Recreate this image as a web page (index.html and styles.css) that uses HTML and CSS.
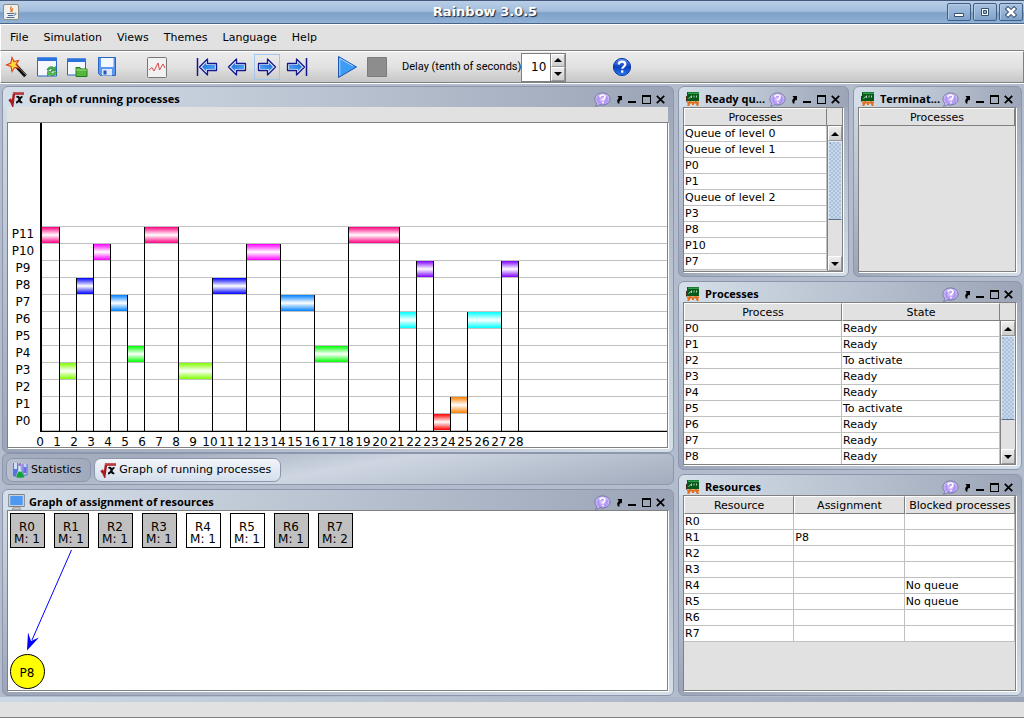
FILE: index.html
```html
<!DOCTYPE html>
<html lang="en">
<head>
<meta charset="utf-8">
<title>Rainbow 3.0.5</title>
<link rel="stylesheet" href="styles.css">
</head>
<body>
<svg class="defs" aria-hidden="true">
  <symbol id="i-help" viewBox="0 0 17 15">
    <path d="M8.500 1C12.500 1 16 3.500 16 7S12.500 13 8.500 13c-1 0-2-.1-2.800-.4C4.500 13.600 3 14 1.500 14c1-.8 1.500-1.500 1.500-2.400C1.500 10.500 1 9 1 7c0-3.500 3.500-6 7.500-6z" fill="url(#bubble)" stroke="#5a5590" stroke-width=".7"/>
    <path d="M6 5.200C6 3.600 7 3 8.500 3S11 3.800 11 5c0 1.600-2 1.800-2 3.200M9 10v1.500" fill="none" stroke="#fff" stroke-width="1.600"/>
  </symbol>
  <symbol id="i-undock" viewBox="0 0 7 9"><path d="M1.500 1H6v4.500L5 4.700C3.600 5.500 3.200 6.500 3.500 8.500H2C.8 6.500 1 4.500 2.800 3z" fill="#000"/></symbol>
  <symbol id="i-min" viewBox="0 0 9 9"><path d="M0 6h8v2H0z" fill="#000"/></symbol>
  <symbol id="i-max" viewBox="0 0 9 9"><path d="M0 0h9v9H0zM1 2v6h7V2z" fill="#000" fill-rule="evenodd"/></symbol>
  <symbol id="i-close" viewBox="0 0 9 9"><path d="M.8.8l7.400 7.400M8.200.8L.8 8.200" stroke="#000" stroke-width="1.800" fill="none"/></symbol>
  <symbol id="i-board" viewBox="0 0 14 14">
    <path d="M4.500 9L2 14M9.500 9L12 14M1 10.500h12M7 10v3" stroke="#e0701f" stroke-width="2" fill="none"/>
    <path d="M1 0h12v9H1z" fill="#07591a"/><path d="M2 .5h11V2H2z" fill="#2fa04c"/>
    <path d="M2.500 6.500L5 4.500M5.500 6V3.500M8 5.500V3.500M10.500 5.500v-2" stroke="#d8eedb" stroke-width=".8" fill="none"/>
    <path d="M.5 4v5.500" stroke="#4a2a16"/>
  </symbol>
  <symbol id="i-root" viewBox="0 0 17 15">
    <path d="M1 9l1.500-1L4.500 12.500 6 1.500H16" fill="none" stroke="#a81c20" stroke-width="2.400"/>
    <path d="M5.500 2V1H16" fill="none" stroke="#e06868" stroke-width=".8"/>
    <path d="M8.500 5.200c2.200-1 2.600.3 3 2.300s.8 3.400 2.700 2.500M14.500 4.800c-2.500-.2-3.500 5.700-6.500 5.700" fill="none" stroke="#0a0a0a" stroke-width="2"/>
  </symbol>
  <symbol id="i-arrow" viewBox="0 0 24 24">
    <path d="M3.500 12L11.500 4v4.500h9v7h-9V20z" fill="#dcecff" stroke="#16168c" stroke-width="1.300" stroke-linejoin="round"/>
    <path d="M6 12L10.200 7.700V10H19v4h-8.800v2.300z" fill="url(#blue)"/>
  </symbol>
  <symbol id="i-up" viewBox="0 0 8 4"><path d="M0 4L4 0l4 4z" fill="#000"/></symbol>
  <symbol id="i-down" viewBox="0 0 8 4"><path d="M0 0l4 4 4-4z" fill="#000"/></symbol>
  <linearGradient id="blue" x1="0" y1="0" x2="1" y2="1"><stop offset="0" stop-color="#1663cf"/><stop offset="1" stop-color="#59b5ff"/></linearGradient>
  <radialGradient id="bubble"><stop offset="0" stop-color="#e9dcff"/><stop offset=".6" stop-color="#ab8cf2"/><stop offset="1" stop-color="#d6d0ff"/></radialGradient>
  <linearGradient id="orb" x1="0" y1="0" x2="0" y2="1"><stop offset="0" stop-color="#5f97ee"/><stop offset=".5" stop-color="#0b3fc0"/><stop offset="1" stop-color="#2b7bf0"/></linearGradient>
</svg>

<header class="window-title">
  <svg class="java" width="16" height="16" viewBox="0 0 16 16"><rect x=".5" y=".5" width="15" height="15" rx="1.500" fill="#eef0ee" stroke="#8d8d83"/><path d="M8.500 2.500c-3 2 1.500 3-1 5.500M10 4.500C8 5.800 10 6.800 8.700 8" stroke="#e8731c" fill="none" stroke-width="1.200"/><path d="M4 9.500h7M5 11.500h5.500M3.500 13.500h8M11.500 9c2.500 0 1.500 2-.5 2.200" stroke="#4b6c93" fill="none"/></svg>
  <h1>Rainbow 3.0.5</h1>
  <div class="window-buttons">
    <button aria-label="Minimize"><svg width="12" height="12" viewBox="0 0 12 12"><path d="M1.500 7.500h9v3h-9z" fill="#fff" stroke="#34506f"/></svg></button>
    <button aria-label="Maximize"><svg width="12" height="12" viewBox="0 0 12 12"><path d="M2.500 2.500h7v7h-7z" fill="#fff" stroke="#34506f"/><path d="M4.500 4.500h3v3h-3z" fill="#8fb0d4" stroke="#34506f"/></svg></button>
    <button aria-label="Close"><svg width="12" height="12" viewBox="0 0 12 12"><path d="M3 3l6 6m0-6l-6 6" stroke="#34506f" stroke-width="4.500" stroke-linecap="square"/><path d="M3 3l6 6m0-6l-6 6" stroke="#fff" stroke-width="2.600" stroke-linecap="square"/></svg></button>
  </div>
</header>

<nav class="menubar">
  <button>File</button><button>Simulation</button><button>Views</button><button>Themes</button><button>Language</button><button>Help</button>
</nav>

<div class="toolbar">
  <div class="group">
    <button aria-label="New"><svg viewBox="0 0 24 24"><path d="M9.500 9l11 12" stroke="#111" stroke-width="3.600"/><path d="M10 8.500l11 11.500" stroke="#8a7b70" stroke-width="1"/><path d="M7 2.500l2 4 4.500-1-2.500 4 3 3.500-4.500-.5-2.500 4-1-5-4.500-1.500 4.300-2z" fill="#ffd83c" stroke="#d9421e" stroke-width="1.100"/></svg></button>
    <button aria-label="Reload"><svg viewBox="0 0 24 24"><path d="M2.500 3h19v18h-19z" fill="#f4f7fb" stroke="#2a66c4"/><path d="M2 2.500h20V6H2z" fill="#2a72dd"/><path d="M12 15c1-4 6-4 7-2l1.500-1.500V16H16l1.500-1.500c-1.500-1-3-.5-3.500.8z" fill="#3fae49" stroke="#1f7a2c" stroke-width=".6"/><path d="M22 17c-1 4-6 4.500-7.500 2.500L12.500 21v-4.500H17l-1.200 1.500c1.500 1 3 .5 3.700-1z" fill="#57bf52" stroke="#1f7a2c" stroke-width=".6"/></svg></button>
    <button aria-label="Open"><svg viewBox="0 0 24 24"><path d="M2.500 4h18v16h-18z" fill="#f4f7fb" stroke="#2a66c4"/><path d="M2 3.500h19V7H2z" fill="#2a72dd"/><path d="M11 12.500h4l1 1.500h6v7.500H11z" fill="#55b73c" stroke="#24791f"/><path d="M11 15h11" stroke="#9be07d"/></svg></button>
    <button aria-label="Save"><svg viewBox="0 0 24 24"><path d="M3.500 2.500h17v18h-15l-2-2z" fill="#5a97ee" stroke="#2b63be"/><path d="M6 3h12.500v9H6z" fill="#f3f8ff"/><path d="M7 14h10v6.500H7z" fill="#dbe6f6"/><path d="M8.500 15.500h3v4h-3z" fill="#2458b2"/></svg></button>
  </div>
  <div class="group">
    <button aria-label="Statistics"><svg viewBox="0 0 24 24"><rect x="2.500" y="2.500" width="19" height="20" rx="1" fill="#f1f1f1" stroke="#777"/><path d="M4 15l3-2.500 2 3.500 4-8 1.500 7 3.500-6 2 4" fill="none" stroke="#d84848"/></svg></button>
  </div>
  <div class="group">
    <button aria-label="First"><svg viewBox="0 0 24 24"><use href="#i-arrow" x="1"/><path d="M2.500 3v18" stroke="#16168c" stroke-width="1.500"/></svg></button>
    <button aria-label="Previous"><svg viewBox="0 0 24 24"><use href="#i-arrow"/></svg></button>
    <button aria-label="Next" class="focused"><svg viewBox="0 0 24 24"><use href="#i-arrow" transform="matrix(-1 0 0 1 24 0)"/></svg></button>
    <button aria-label="Last"><svg viewBox="0 0 24 24"><use href="#i-arrow" transform="matrix(-1 0 0 1 23 0)"/><path d="M21.500 3v18" stroke="#16168c" stroke-width="1.500"/></svg></button>
  </div>
  <div class="group">
    <button aria-label="Play"><svg viewBox="0 0 24 24"><path d="M3.500 1.500l18 10.500-18 10.500z" fill="#3d9cf5" stroke="#1c55b0"/><path d="M4.800 20.500v-17L18 11" fill="none" stroke="#a9d6ff"/></svg></button>
    <button aria-label="Stop"><svg viewBox="0 0 24 24"><path d="M2.500 2.500h19v19h-19z" fill="#8d8d8d" stroke="#7b7b7b"/></svg></button>
  </div>
  <div class="delay">
    <label for="delay">Delay (tenth of seconds)</label>
    <div class="spinner">
      <input id="delay" type="text" value="10">
      <div class="steps">
        <button aria-label="Increase"><svg width="8" height="4"><use href="#i-up"/></svg></button>
        <button aria-label="Decrease"><svg width="8" height="4"><use href="#i-down"/></svg></button>
      </div>
    </div>
  </div>
  <button aria-label="Help"><svg viewBox="0 0 24 24"><circle cx="12" cy="12" r="8.600" fill="url(#orb)" stroke="#0b3aa8"/><path d="M8.800 9.600C8.800 7.500 10.200 6.700 12 6.700s3.300 1 3.300 2.800c0 2.200-3 2.200-3 4.300M12.200 15.300v2.400" stroke="#fff" stroke-width="2.200" fill="none"/></svg></button>
</div>

<main class="desktop">
  <div class="column left">
    <section class="panel run-panel">
      <div class="panel-title">
        <svg width="17" height="15"><use href="#i-root"/></svg>
        <h2>Graph of running processes</h2>
        <div class="actions"><button aria-label="Help"><svg width="17" height="15"><use href="#i-help"/></svg></button><button aria-label="Undock"><svg width="7" height="9"><use href="#i-undock"/></svg></button><button aria-label="Minimize"><svg width="9" height="9"><use href="#i-min"/></svg></button><button aria-label="Maximize"><svg width="9" height="9"><use href="#i-max"/></svg></button><button aria-label="Close"><svg width="9" height="9"><use href="#i-close"/></svg></button></div>
      </div>
      <div class="strip"></div>
      <div class="content canvas">
        <svg class="gantt" width="659" height="324" viewBox="8 123 659 324">
          <defs>
            <linearGradient id="c0" x2="0" y2="1"><stop offset="0" stop-color="#f00"/><stop offset=".5" stop-color="#fff"/><stop offset="1" stop-color="#f00"/></linearGradient>
            <linearGradient id="c1" x2="0" y2="1"><stop offset="0" stop-color="#ff8000"/><stop offset=".5" stop-color="#fff"/><stop offset="1" stop-color="#ff8000"/></linearGradient>
            <linearGradient id="c3" x2="0" y2="1"><stop offset="0" stop-color="#80ff00"/><stop offset=".5" stop-color="#fff"/><stop offset="1" stop-color="#80ff00"/></linearGradient>
            <linearGradient id="c4" x2="0" y2="1"><stop offset="0" stop-color="#0f0"/><stop offset=".5" stop-color="#fff"/><stop offset="1" stop-color="#0f0"/></linearGradient>
            <linearGradient id="c6" x2="0" y2="1"><stop offset="0" stop-color="#0ff"/><stop offset=".5" stop-color="#fff"/><stop offset="1" stop-color="#0ff"/></linearGradient>
            <linearGradient id="c7" x2="0" y2="1"><stop offset="0" stop-color="#0080ff"/><stop offset=".5" stop-color="#fff"/><stop offset="1" stop-color="#0080ff"/></linearGradient>
            <linearGradient id="c8" x2="0" y2="1"><stop offset="0" stop-color="#00f"/><stop offset=".5" stop-color="#fff"/><stop offset="1" stop-color="#00f"/></linearGradient>
            <linearGradient id="c9" x2="0" y2="1"><stop offset="0" stop-color="#8000ff"/><stop offset=".5" stop-color="#fff"/><stop offset="1" stop-color="#8000ff"/></linearGradient>
            <linearGradient id="c10" x2="0" y2="1"><stop offset="0" stop-color="#f0f"/><stop offset=".5" stop-color="#fff"/><stop offset="1" stop-color="#f0f"/></linearGradient>
            <linearGradient id="c11" x2="0" y2="1"><stop offset="0" stop-color="#ff0080"/><stop offset=".5" stop-color="#fff"/><stop offset="1" stop-color="#ff0080"/></linearGradient>
          </defs>
          <path class="grid" d="M40 226h2000v1H40zM40 243h2000v1H40zM40 260h2000v1H40zM40 277h2000v1H40zM40 294h2000v1H40zM40 311h2000v1H40zM40 328h2000v1H40zM40 345h2000v1H40zM40 362h2000v1H40zM40 379h2000v1H40zM40 396h2000v1H40zM40 413h2000v1H40zM40 430h2000v1H40z"/>
          <rect x="42" y="227" width="17" height="16" fill="url(#c11)"/>
          <rect x="60" y="363" width="16" height="16" fill="url(#c3)"/>
          <rect x="77" y="278" width="16" height="16" fill="url(#c8)"/>
          <rect x="94" y="244" width="16" height="16" fill="url(#c10)"/>
          <rect x="111" y="295" width="16" height="16" fill="url(#c7)"/>
          <rect x="128" y="346" width="16" height="16" fill="url(#c4)"/>
          <rect x="145" y="227" width="33" height="16" fill="url(#c11)"/>
          <rect x="179" y="363" width="33" height="16" fill="url(#c3)"/>
          <rect x="213" y="278" width="33" height="16" fill="url(#c8)"/>
          <rect x="247" y="244" width="33" height="16" fill="url(#c10)"/>
          <rect x="281" y="295" width="33" height="16" fill="url(#c7)"/>
          <rect x="315" y="346" width="33" height="16" fill="url(#c4)"/>
          <rect x="349" y="227" width="50" height="16" fill="url(#c11)"/>
          <rect x="400" y="312" width="16" height="16" fill="url(#c6)"/>
          <rect x="417" y="261" width="16" height="16" fill="url(#c9)"/>
          <rect x="434" y="414" width="16" height="16" fill="url(#c0)"/>
          <rect x="451" y="397" width="16" height="16" fill="url(#c1)"/>
          <rect x="468" y="312" width="33" height="16" fill="url(#c6)"/>
          <rect x="502" y="261" width="16" height="16" fill="url(#c9)"/>
          <path class="ink" d="M59 227h1v204h-1zM76 278h1v153h-1zM93 244h1v187h-1zM110 244h1v187h-1zM127 295h1v136h-1zM144 227h1v204h-1zM178 227h1v204h-1zM212 278h1v153h-1zM246 244h1v187h-1zM280 244h1v187h-1zM314 295h1v136h-1zM348 227h1v204h-1zM399 227h1v204h-1zM416 261h1v170h-1zM433 261h1v170h-1zM450 397h1v34h-1zM467 312h1v119h-1zM501 261h1v170h-1zM518 261h1v170h-1z"/>
          <path class="ink" d="M40 120h2v312h-2zM40 431h2000v1H40z"/>
          <g class="labels">
            <text x="23" y="238">P11</text><text x="23" y="255">P10</text><text x="23" y="272">P9</text><text x="23" y="289">P8</text><text x="23" y="306">P7</text><text x="23" y="323">P6</text><text x="23" y="340">P5</text><text x="23" y="357">P4</text><text x="23" y="374">P3</text><text x="23" y="391">P2</text><text x="23" y="408">P1</text><text x="23" y="425">P0</text>
            <text x="40" y="446">0</text><text x="57" y="446">1</text><text x="74" y="446">2</text><text x="91" y="446">3</text><text x="108" y="446">4</text><text x="125" y="446">5</text><text x="142" y="446">6</text><text x="159" y="446">7</text><text x="176" y="446">8</text><text x="193" y="446">9</text><text x="210" y="446">10</text><text x="227" y="446">11</text><text x="244" y="446">12</text><text x="261" y="446">13</text><text x="278" y="446">14</text><text x="295" y="446">15</text><text x="312" y="446">16</text><text x="329" y="446">17</text><text x="346" y="446">18</text><text x="363" y="446">19</text><text x="380" y="446">20</text><text x="397" y="446">21</text><text x="414" y="446">22</text><text x="431" y="446">23</text><text x="448" y="446">24</text><text x="465" y="446">25</text><text x="482" y="446">26</text><text x="499" y="446">27</text><text x="516" y="446">28</text>
          </g>
        </svg>
      </div>
    </section>

    <div class="tabs">
      <button class="tab"><svg width="17" height="16" viewBox="0 0 17 16"><path d="M1.500 1v13h4V1" fill="#cfe0ff" stroke="#5f79c8"/><path d="M2 7h3v7H2z" fill="#5276e0"/><path d="M11 2v11h4V2" fill="#c3d2ff" stroke="#5f6fd0"/><path d="M11.500 5h3v6h-3z" fill="#6f6ae8"/><path d="M6 3h3v4l3.500 6.500c0 1.500-1 2-2 2h-5c-1.500 0-2-1-1.500-2L6 8z" fill="#dfe8ff" stroke="#6c7fb5" stroke-width=".7"/><path d="M6.500 9.500h3.200l2.300 4c.3 1-.5 2-1.500 2H5.700c-1.200 0-1.700-1-1.200-2z" fill="#13a637"/><path d="M7 1.500h2v2H7z" fill="#b451d6"/></svg>Statistics</button>
      <button class="tab selected"><svg width="17" height="15"><use href="#i-root"/></svg>Graph of running processes</button>
    </div>

    <section class="panel assign-panel">
      <div class="panel-title">
        <svg width="17" height="16" viewBox="0 0 17 16"><path d="M1.500 1h14v11h-14z" fill="#4f98f2" stroke="#e3e3e3" stroke-width="1.400"/><path d="M.7.500h15.600v12H.7z" fill="none" stroke="#6a6a6a" stroke-width=".8"/><path d="M6 13h5l2 2.300H4z" fill="#d0d0cc" stroke="#777" stroke-width=".6"/></svg>
        <h2>Graph of assignment of resources</h2>
        <div class="actions"><button aria-label="Help"><svg width="17" height="15"><use href="#i-help"/></svg></button><button aria-label="Undock"><svg width="7" height="9"><use href="#i-undock"/></svg></button><button aria-label="Minimize"><svg width="9" height="9"><use href="#i-min"/></svg></button><button aria-label="Maximize"><svg width="9" height="9"><use href="#i-max"/></svg></button><button aria-label="Close"><svg width="9" height="9"><use href="#i-close"/></svg></button></div>
      </div>
      <div class="content canvas">
        <svg width="659" height="179" viewBox="8 511 659 179">
          <g class="nodes">
            <rect class="busy" x="10.500" y="513.500" width="34" height="34"/><rect class="busy" x="54.500" y="513.500" width="34" height="34"/><rect class="busy" x="98.500" y="513.500" width="34" height="34"/><rect class="busy" x="142.500" y="513.500" width="34" height="34"/><rect x="186.500" y="513.500" width="34" height="34"/><rect x="230.500" y="513.500" width="34" height="34"/><rect class="busy" x="274.500" y="513.500" width="34" height="34"/><rect class="busy" x="318.500" y="513.500" width="34" height="34"/>
            <circle cx="27.500" cy="671.500" r="17"/>
          </g>
          <path d="M71.500 550L32 640" stroke="#00f" fill="none"/>
          <path d="M27 650.500l1-18 3 8.500 8-3.500z" fill="#00f"/>
          <g class="labels">
            <text x="27" y="531">R0</text><text x="27" y="543">M: 1</text><text x="71" y="531">R1</text><text x="71" y="543">M: 1</text><text x="115" y="531">R2</text><text x="115" y="543">M: 1</text><text x="159" y="531">R3</text><text x="159" y="543">M: 1</text><text x="203" y="531">R4</text><text x="203" y="543">M: 1</text><text x="247" y="531">R5</text><text x="247" y="543">M: 1</text><text x="291" y="531">R6</text><text x="291" y="543">M: 1</text><text x="335" y="531">R7</text><text x="335" y="543">M: 2</text><text x="27" y="677">P8</text>
          </g>
        </svg>
      </div>
    </section>
  </div>

  <div class="column right">
    <div class="queues">
      <section class="panel">
        <div class="panel-title">
          <svg width="14" height="14"><use href="#i-board"/></svg>
          <h2>Ready qu...</h2>
          <div class="actions"><button aria-label="Help"><svg width="17" height="15"><use href="#i-help"/></svg></button><button aria-label="Undock"><svg width="7" height="9"><use href="#i-undock"/></svg></button><button aria-label="Minimize"><svg width="9" height="9"><use href="#i-min"/></svg></button><button aria-label="Maximize"><svg width="9" height="9"><use href="#i-max"/></svg></button><button aria-label="Close"><svg width="9" height="9"><use href="#i-close"/></svg></button></div>
        </div>
        <div class="content scroller">
          <table>
            <thead><tr><th>Processes</th></tr></thead>
            <tbody><tr><td>Queue of level 0</td></tr><tr><td>Queue of level 1</td></tr><tr><td>P0</td></tr><tr><td>P1</td></tr><tr><td>Queue of level 2</td></tr><tr><td>P3</td></tr><tr><td>P8</td></tr><tr><td>P10</td></tr><tr><td>P7</td></tr></tbody>
          </table>
          <div class="scrollbar"><button aria-label="Scroll up"><svg width="8" height="4"><use href="#i-up"/></svg></button><div class="track"><div class="thumb queue-thumb"></div></div><button aria-label="Scroll down"><svg width="8" height="4"><use href="#i-down"/></svg></button></div>
        </div>
      </section>
      <section class="panel">
        <div class="panel-title">
          <svg width="14" height="14"><use href="#i-board"/></svg>
          <h2>Terminat...</h2>
          <div class="actions"><button aria-label="Help"><svg width="17" height="15"><use href="#i-help"/></svg></button><button aria-label="Undock"><svg width="7" height="9"><use href="#i-undock"/></svg></button><button aria-label="Minimize"><svg width="9" height="9"><use href="#i-min"/></svg></button><button aria-label="Maximize"><svg width="9" height="9"><use href="#i-max"/></svg></button><button aria-label="Close"><svg width="9" height="9"><use href="#i-close"/></svg></button></div>
        </div>
        <div class="content scroller">
          <table><thead><tr><th>Processes</th></tr></thead></table>
        </div>
      </section>
    </div>

    <section class="panel">
      <div class="panel-title">
        <svg width="14" height="14"><use href="#i-board"/></svg>
        <h2>Processes</h2>
        <div class="actions"><button aria-label="Help"><svg width="17" height="15"><use href="#i-help"/></svg></button><button aria-label="Undock"><svg width="7" height="9"><use href="#i-undock"/></svg></button><button aria-label="Minimize"><svg width="9" height="9"><use href="#i-min"/></svg></button><button aria-label="Maximize"><svg width="9" height="9"><use href="#i-max"/></svg></button><button aria-label="Close"><svg width="9" height="9"><use href="#i-close"/></svg></button></div>
      </div>
      <div class="content scroller">
        <table>
          <thead><tr><th>Process</th><th>State</th></tr></thead>
          <tbody><tr><td>P0</td><td>Ready</td></tr><tr><td>P1</td><td>Ready</td></tr><tr><td>P2</td><td>To activate</td></tr><tr><td>P3</td><td>Ready</td></tr><tr><td>P4</td><td>Ready</td></tr><tr><td>P5</td><td>To activate</td></tr><tr><td>P6</td><td>Ready</td></tr><tr><td>P7</td><td>Ready</td></tr><tr><td>P8</td><td>Ready</td></tr></tbody>
        </table>
        <div class="scrollbar"><button aria-label="Scroll up"><svg width="8" height="4"><use href="#i-up"/></svg></button><div class="track"><div class="thumb process-thumb"></div></div><button aria-label="Scroll down"><svg width="8" height="4"><use href="#i-down"/></svg></button></div>
      </div>
    </section>

    <section class="panel">
      <div class="panel-title">
        <svg width="14" height="14"><use href="#i-board"/></svg>
        <h2>Resources</h2>
        <div class="actions"><button aria-label="Help"><svg width="17" height="15"><use href="#i-help"/></svg></button><button aria-label="Undock"><svg width="7" height="9"><use href="#i-undock"/></svg></button><button aria-label="Minimize"><svg width="9" height="9"><use href="#i-min"/></svg></button><button aria-label="Maximize"><svg width="9" height="9"><use href="#i-max"/></svg></button><button aria-label="Close"><svg width="9" height="9"><use href="#i-close"/></svg></button></div>
      </div>
      <div class="content scroller">
        <table>
          <thead><tr><th>Resource</th><th>Assignment</th><th>Blocked processes</th></tr></thead>
          <tbody><tr><td>R0</td><td></td><td></td></tr><tr><td>R1</td><td>P8</td><td></td></tr><tr><td>R2</td><td></td><td></td></tr><tr><td>R3</td><td></td><td></td></tr><tr><td>R4</td><td></td><td>No queue</td></tr><tr><td>R5</td><td></td><td>No queue</td></tr><tr><td>R6</td><td></td><td></td></tr><tr><td>R7</td><td></td><td></td></tr></tbody>
        </table>
      </div>
    </section>
  </div>
</main>

<footer class="statusbar"></footer>
</body>
</html>
```
FILE: styles.css
```css
:root {
  --face: #e1e1e1;
  --line: #808080;
  --light: #d5dfe9;
  --dark: #9ca5b7;
  --edge: #8d96ac;
}

* { box-sizing: border-box; }

body {
  margin: 0;
  height: 100vh;
  display: flex;
  flex-direction: column;
  background: var(--face);
  color: #000;
  font: 11px/16px "DejaVu Sans", sans-serif;
}

button {
  display: flex;
  align-items: center;
  justify-content: center;
  margin: 0;
  padding: 0;
  border: 0;
  background: none;
  color: inherit;
  font: inherit;
}

h1, h2 { margin: 0; }
svg { display: block; flex: none; }
.defs { position: absolute; width: 0; height: 0; }

.window-title {
  display: flex;
  flex: none;
  align-items: center;
  height: 24px;
  padding: 0 1px 0 3px;
  border-top: 1px solid #46587a;
  border-bottom: 1px solid #4a6488;
  background: linear-gradient(#b9cee6, #a3bfde 45%, #7da1c9 55%, #92b2d6);
}
.window-title h1 {
  flex: 1;
  padding-left: 4px;
  color: #fff;
  font: bold 13px/22px "DejaVu Sans", sans-serif;
  text-align: center;
  text-shadow: 1px 1px 1px #223;
}
.window-buttons { display: flex; gap: 2px; }
.window-buttons button {
  width: 24px;
  height: 18px;
  border: 1px solid #3f5f86;
  border-radius: 2px;
  box-shadow: inset 1px 1px 0 #b5cbe4;
  background: linear-gradient(#a9c3e0, #7fa2ca);
}

.menubar {
  display: flex;
  flex: none;
  gap: 15px;
  height: 27px;
  padding: 0 9px;
  border-top: 1px solid #fff;
  border-left: 1px solid #fff;
  border-bottom: 1px solid var(--line);
}

.toolbar {
  display: flex;
  flex: none;
  align-items: center;
  height: 32px;
  padding-left: 1px;
  border: 1px solid #fff;
  border-right-color: var(--line);
  border-bottom-color: var(--line);
  background: linear-gradient(#ececec, #e1e1e1 50%, #c6c6c6);
}
.toolbar > .group { display: flex; margin-right: 20px; }
.toolbar > button, .group button { width: 30px; height: 30px; }
.toolbar > button svg, .group button svg { width: 24px; height: 24px; }
.group .focused { width: 26px; height: 26px; margin: 2px; border: 1px solid #a3c6ec; }
.delay {
  display: flex;
  align-items: center;
  margin: 0 41px 0 -10px;
  font-family: Roboto, sans-serif;
}
.delay label { min-width: 117px; }
.spinner { display: flex; height: 29px; border: 1px solid var(--line); }
.spinner input {
  width: 28px;
  padding: 0 4px 0 0;
  border: 0;
  background: #fff;
  color: #000;
  font: 12px/16px "DejaVu Sans", sans-serif;
  text-align: right;
}
.steps { display: grid; width: 15px; border-left: 1px solid var(--line); }
.steps button, .scrollbar button {
  border: 1px solid #fff;
  border-right-color: #999;
  border-bottom-color: #999;
  background: linear-gradient(#eee, #ccc);
}

.desktop {
  flex: 1;
  min-height: 0;
  display: grid;
  grid-template-columns: 672fr 344fr;
  grid-template-rows: minmax(0, 1fr);
  gap: 4px;
  padding: 2px 2px 6px;
  background: linear-gradient(90deg, #ccd8e5, #9ca5b7) bottom / 100% 5px no-repeat, #b2bccd;
  border-top: 1px solid #fff;
}
.column { display: grid; min-width: 0; min-height: 0; }
.left { grid-template-rows: 367fr 32px 211fr; }
.right { grid-template-rows: 191fr 189fr 222fr; gap: 4px; }
.queues { display: grid; grid-template-columns: 171fr 169fr; gap: 4px; min-height: 0; }

.panel {
  display: flex;
  flex-direction: column;
  min-width: 0;
  min-height: 0;
  overflow: hidden;
  border: 1px solid var(--edge);
  border-radius: 6px;
  padding: 0 5px 4px 4px;
  background:
    linear-gradient(90deg, var(--light), var(--dark)) top / 100% 20px no-repeat,
    linear-gradient(90deg, var(--dark), var(--light)) bottom / 100% 5px no-repeat,
    linear-gradient(var(--light), var(--dark)) left / 50% 100% no-repeat,
    linear-gradient(var(--dark), var(--light)) right / 50% 100% no-repeat;
}
.assign-panel { margin-top: 4px; }
.panel-title { display: flex; flex: none; align-items: center; height: 20px; padding: 4px 3px 0 1px; gap: 4px; }
.right .panel-title { padding-left: 3px; gap: 5px; }
.panel-title h2 {
  flex: 1;
  min-width: 0;
  font: bold 11px/16px "Open Sans", sans-serif;
  white-space: nowrap;
}
.actions { display: flex; align-items: center; gap: 5px; }
.strip { flex: none; height: 15px; background: var(--face); }
.content {
  flex: 1;
  min-height: 0;
  overflow: hidden;
  border: 1px solid var(--line);
  background: var(--face);
  box-shadow: 1px 1px 0 #fff;
}
.canvas { background: #fff; }
.canvas svg { overflow: visible; }
.gantt { shape-rendering: crispEdges; }
.grid { fill: #c0c0c0; }
.ink { fill: #000; }
.labels { font: 12px "DejaVu Sans", sans-serif; text-anchor: middle; fill: #000; }
.nodes { fill: #fff; stroke: #000; }
.nodes .busy { fill: #c0c0c0; }
.nodes circle { fill: #ff0; }

.tabs {
  display: flex;
  align-items: center;
  gap: 3px;
  padding: 2px 3px 0;
  border: 1px solid var(--edge);
  border-radius: 6px;
  background: linear-gradient(170deg, #a4adbe 20%, #cdd6e1 50%, #a3acbd);
}
.tab {
  gap: 2px;
  height: 24px;
  padding: 0 9px 0 5px;
  border: 1px solid var(--edge);
  border-radius: 7px;
  background: linear-gradient(90deg, #b9c1cf, #a0a9bb);
}
.tab.selected { background: linear-gradient(#f3f6fa, #d3deec); }

.scroller { display: flex; align-items: flex-start; }
table { flex: 1; width: 100%; min-width: 0; border-collapse: separate; border-spacing: 0; table-layout: fixed; }
th {
  height: 18px;
  padding: 0;
  border: 1px solid #fff;
  border-right-color: var(--line);
  border-bottom-color: var(--line);
  background: var(--face);
  font-weight: normal;
  line-height: 15px;
  white-space: nowrap;
}
td {
  height: 16px;
  padding: 0 1px;
  border-right: 1px solid #c0c0c0;
  border-bottom: 1px solid #c0c0c0;
  background: #fff;
  line-height: 15px;
}
.scrollbar {
  display: flex;
  flex: none;
  flex-direction: column;
  align-self: stretch;
  width: 15px;
  margin-top: 17px;
  border-top: 1px solid var(--line);
  border-left: 1px solid var(--line);
}
.scrollbar button { height: 15px; }
.track { flex: 1; min-height: 0; }
.thumb {
  border: 1px solid #dce8f5;
  border-bottom-color: #5c6f88;
  background:
    linear-gradient(#6f87a5, #6f87a5) 1px 1px / 1px 1px no-repeat,
    radial-gradient(circle at 1px 1px, #708aa9 0, transparent 1px) 0 0 / 4px 4px,
    radial-gradient(circle at 3px 3px, #708aa9 0, transparent 1px) 0 0 / 4px 4px,
    #c6d8ed;
}
.queue-thumb { height: 69%; }
.process-thumb { height: 74%; }

.statusbar { flex: none; height: 16px; border-bottom: 1px solid var(--line); }
```
